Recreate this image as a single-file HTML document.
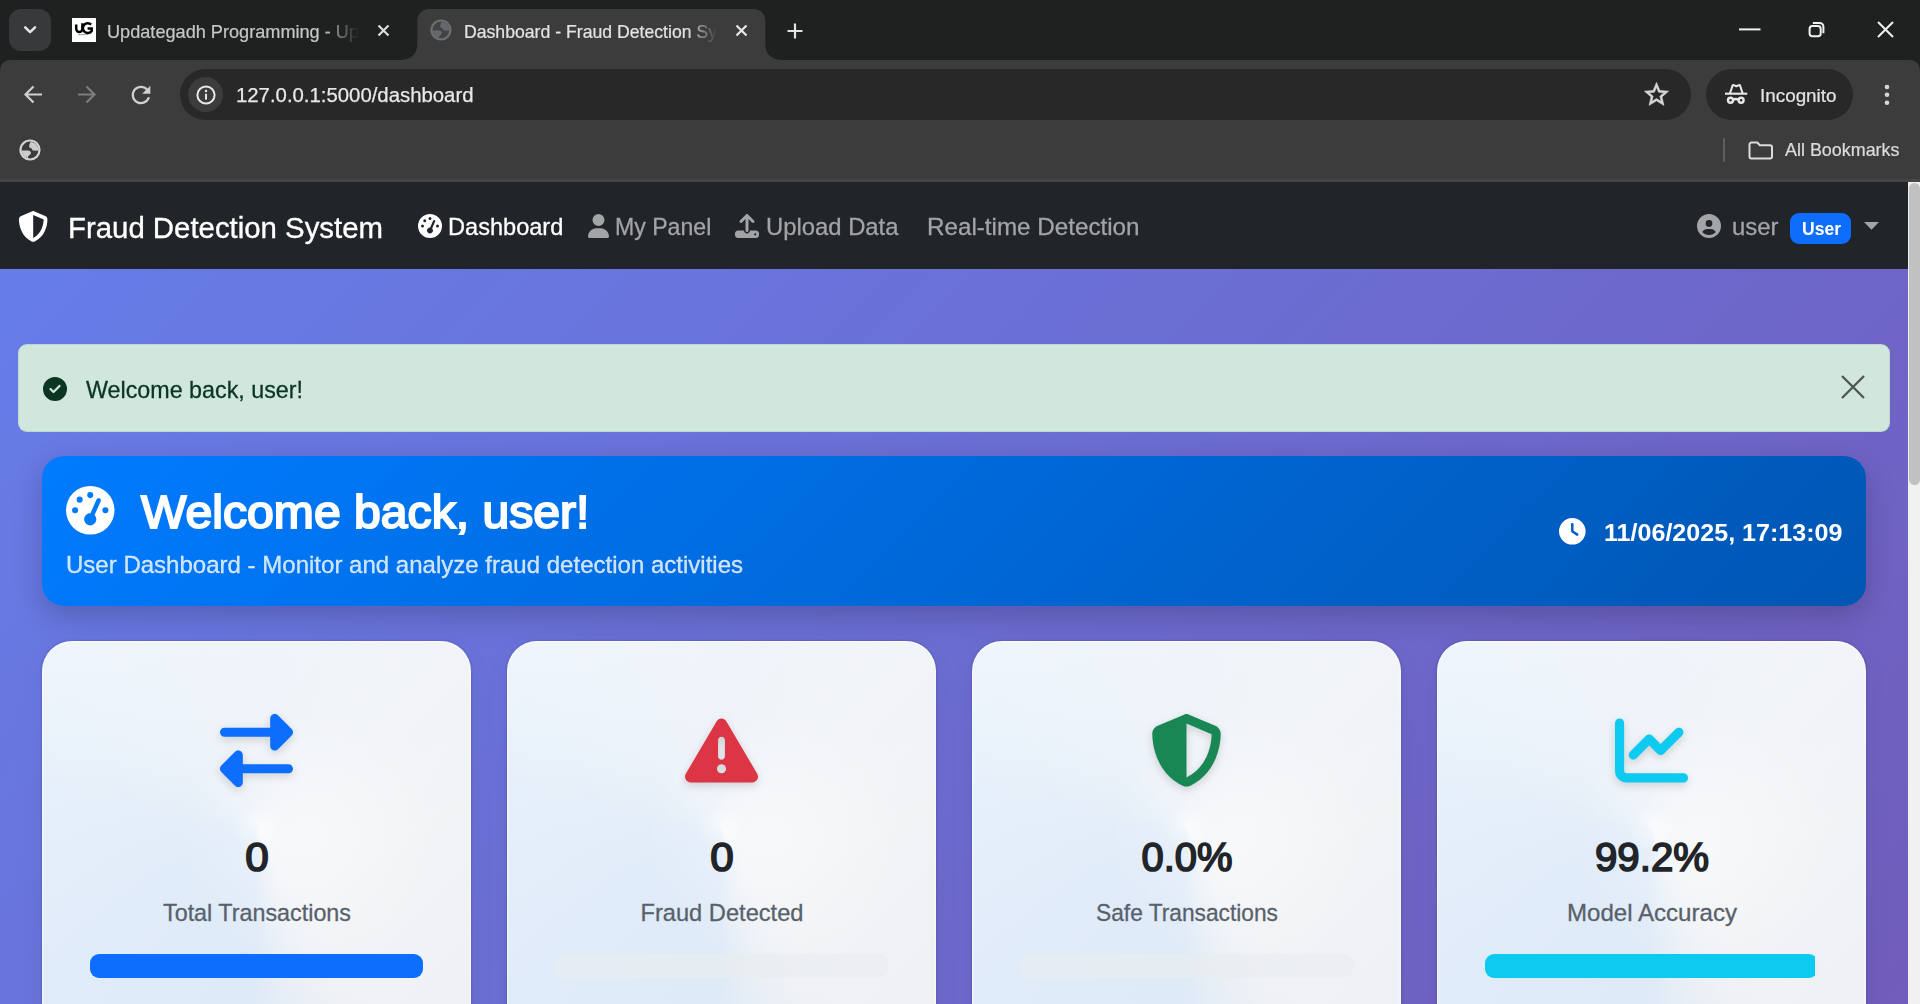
<!DOCTYPE html>
<html lang="en"><head><meta charset="utf-8"><title>Dashboard - Fraud Detection System</title>
<style>
*{margin:0;padding:0;box-sizing:border-box}
html,body{width:1920px;height:1004px;overflow:hidden;background:#1f2120;font-family:"Liberation Sans",sans-serif}
body{position:relative}
.a{position:absolute;display:block}
.t{position:absolute;display:inline-block;white-space:nowrap;font-family:"Liberation Sans",sans-serif}
svg{position:absolute;display:block;overflow:visible}
/* chrome */
#frame{left:0;top:0;width:1920px;height:60px;background:#1f2120}
#tabsearch{left:9px;top:9px;width:42px;height:42px;border-radius:12px;background:#38393a}
#toolbar{left:0;top:60px;width:1920px;height:119px;background:#3c3c3c;border-radius:10px 10px 0 0}
#tbline{left:0;top:178.6px;width:1920px;height:3.1px;background:linear-gradient(#414141,#494949 40%,#494949 70%,#3a3b3d);z-index:5}
#omni{left:180px;top:69.4px;width:1511px;height:50.2px;border-radius:26px;background:#282828}
#chip{left:188px;top:77px;width:35px;height:35px;border-radius:50%;background:#3c3c3c}
#incogpill{left:1706px;top:69.4px;width:147px;height:50.2px;border-radius:26px;background:#282828}
#bmsep{left:1723px;top:138px;width:2px;height:24px;background:#5e5e5e;border-radius:1px}
#fav{left:72px;top:18px;width:24px;height:24px;background:#fff}
/* page */
#page{left:0;top:181px;width:1908px;height:823px;overflow:hidden;background:#6a73d9}
#grad{left:0;top:0;width:1908px;height:2240px;background:linear-gradient(135deg,#667eea 0%,#764ba2 100%)}
#nav{left:0;top:0;width:1908px;height:87.75px;background:#212529}
#sbar{left:1908px;top:181px;width:12px;height:823px;background:#f1f1f1}
#sthumb{left:1909px;top:183px;width:11px;height:302px;background:#c1c1c1;border-radius:6px}
#badge{left:1790px;top:32px;width:61px;height:31px;border-radius:9px;background:#0d6efd}
#alert{left:18px;top:163px;width:1872px;height:88px;border-radius:9px;background:#d1e7dd;border:1.5px solid rgba(163,207,187,.55)}
#hdr{left:42px;top:275px;width:1824px;height:150px;border-radius:22px;background:linear-gradient(135deg,#007bff 0%,#0056b3 100%);box-shadow:0 10px 30px rgba(0,0,0,.2)}
.card{top:460.3px;width:429px;height:430px;border-radius:30px;
 background:radial-gradient(circle at 50% 186.7px,rgba(255,255,255,.5) 0,rgba(255,255,255,0) 24px),radial-gradient(circle at 62% 198px,rgba(255,255,255,.4) 0,rgba(255,255,255,0) 130px),conic-gradient(from 180deg at 50% 186.7px,rgba(0,123,255,0.0808) 0deg,rgba(0,123,255,0.0850) 5deg,rgba(0,123,255,0.0850) 60deg,rgba(0,123,255,0.0757) 95deg,rgba(0,123,255,0.0442) 135deg,rgba(0,123,255,0.0314) 180deg,rgba(0,123,255,0.0170) 225deg,rgba(0,123,255,0.0051) 270deg,rgba(0,123,255,0.0034) 318deg,rgba(0,123,255,0.0068) 328deg,rgba(0,123,255,0.0162) 337deg,rgba(0,123,255,0.0323) 345deg,rgba(0,123,255,0.0527) 352deg,rgba(0,123,255,0.0697) 357deg,rgba(0,123,255,0.0808) 360deg),linear-gradient(135deg,#fafbfc 0%,#f4f5f7 56%,#eff1f4 92%);
 box-shadow:0 0 3px rgba(0,0,0,.22),0 8px 30px rgba(0,0,0,.045),inset 0 0 0 1.5px rgba(255,255,255,.45)}
.prog{top:312.9px;left:48px;width:333px;height:24px;border-radius:9px;background:rgba(233,236,239,.6);overflow:hidden}
.prog i{position:absolute;left:0;top:0;height:24px;display:block}

</style></head><body>
<div id="frame" class="a"></div>
<div id="tabsearch" class="a"></div>
<div id="toolbar" class="a"></div>
<!-- active tab -->
<svg style="left:400px;top:9px" width="383" height="51" viewBox="0 0 383 51"><path d="M0 51 C10 51 17.300 45.500 17.300 36 V12 C17.300 5 22.300 0 29.300 0 H353.300 C360.300 0 365.300 5 365.300 12 V36 C365.300 45.500 372.600 51 382.600 51 Z" fill="#3c3c3c"/></svg>
<div id="tbline" class="a"></div>
<div id="omni" class="a"></div>
<div id="chip" class="a"></div>
<div id="incogpill" class="a"></div>
<div id="bmsep" class="a"></div>
<div id="fav" class="a"></div>
<!-- favicon UG -->
<svg style="left:72px;top:18px" width="24" height="24" viewBox="0 0 24 24"><path d="M4.200 6.600 V10.600 A3.100 3.500 0 0 0 10.400 10.600 V5.200" fill="none" stroke="#000" stroke-width="2.500"/><path d="M19.200 6.600 A4.900 4.900 0 1 0 19.700 13 V10.400 H15.600" fill="none" stroke="#000" stroke-width="2.500"/><rect x="6" y="16.400" width="10" height="0.700" fill="#777"/></svg>
<!-- tab search chevron -->
<svg style="left:22px;top:23px" width="16" height="14" viewBox="0 0 16 14"><path d="M3.2 4.300 L8.100 9.200 L13 4.300" fill="none" stroke="#e3e3e3" stroke-width="2.500" stroke-linecap="round" stroke-linejoin="round"/></svg>
<!-- tab close buttons -->
<svg style="left:377px;top:24px" width="13" height="13" viewBox="0 0 13 13"><path d="M1.5 1.5 L11.5 11.5 M11.5 1.5 L1.5 11.5" stroke="#dcdcdc" stroke-width="2.2" stroke-linecap="butt"/></svg>
<svg style="left:734.5px;top:24px" width="13" height="13" viewBox="0 0 13 13"><path d="M1.5 1.5 L11.5 11.5 M11.5 1.5 L1.5 11.5" stroke="#e8e8e8" stroke-width="2.2" stroke-linecap="butt"/></svg>
<!-- new tab plus -->
<svg style="left:787px;top:22.5px" width="16" height="16" viewBox="0 0 16 16"><path d="M8 0.5 V15.5 M0.5 8 H15.5" stroke="#e3e3e3" stroke-width="2.2"/></svg>
<!-- globe tab -->
<svg style="left:429px;top:17.6px" width="24" height="24" viewBox="0 0 24 24"><circle cx="12" cy="12" r="10.600" fill="#6e6f71"/><circle cx="12" cy="12" r="8.400" fill="#424347"/><path d="M12.800 3.650 A8.400 8.400 0 0 1 20.400 12.800 L14.600 12.600 C14.400 10.800 13.200 9.600 11 9.200 C11.200 7 11.600 5.400 12.800 3.650 Z" fill="#67686b"/><path d="M3.700 12.600 A8.400 8.400 0 0 0 10.200 20.200 C9.600 18.600 10.400 17.600 12 16.800 C13.200 16 13.200 14.600 12.400 13.600 C11.600 12.800 10.600 12.600 9.500 12.600 Z" fill="#67686b"/></svg>
<!-- window controls -->
<svg style="left:1739px;top:27.5px" width="22" height="3" viewBox="0 0 22 3"><rect x="0" y="0.4" width="21.5" height="2" fill="#f0f0f0"/></svg>
<svg style="left:1808px;top:21px" width="18" height="18" viewBox="0 0 18 18"><rect x="1.600" y="5.100" width="11.100" height="10.200" rx="2.800" fill="none" stroke="#f0f0f0" stroke-width="2"/><path d="M4.800 1.900 H11.600 A3.800 3.800 0 0 1 15.400 5.700 V12.300" fill="none" stroke="#f0f0f0" stroke-width="2"/></svg>
<svg style="left:1877px;top:21px" width="17" height="17" viewBox="0 0 17 17"><path d="M1 1 L16 16 M16 1 L1 16" stroke="#f0f0f0" stroke-width="2"/></svg>
<!-- nav arrows -->
<svg style="left:23px;top:84px" width="21" height="21" viewBox="0 0 21 21"><path d="M19 10.5 H3 M10.5 2.5 L2.5 10.5 L10.5 18.5" fill="none" stroke="#d0d0d0" stroke-width="2.2" stroke-linejoin="miter"/></svg>
<svg style="left:76px;top:84px" width="21" height="21" viewBox="0 0 21 21"><path d="M2 10.5 H18 M10.5 2.5 L18.500 10.5 L10.5 18.5" fill="none" stroke="#7d7d7d" stroke-width="2.2" stroke-linejoin="miter"/></svg>
<!-- reload -->
<svg style="left:126.500px;top:80.500px" width="28" height="28" viewBox="0 0 24 24"><path d="M17.65 6.35C16.2 4.9 14.21 4 12 4c-4.42 0-7.99 3.58-7.99 8s3.570 8 7.990 8c3.730 0 6.840-2.550 7.730-6h-2.080c-.82 2.330-3.040 4-5.650 4-3.310 0-6-2.690-6-6s2.690-6 6-6c1.660 0 3.140.69 4.220 1.780L13 11h7V4l-2.350 2.350z" fill="#d0d0d0"/></svg>
<!-- info icon -->
<svg style="left:194.500px;top:83.500px" width="22" height="22" viewBox="0 0 22 22"><circle cx="11" cy="11" r="8.600" fill="none" stroke="#e8e8e8" stroke-width="2"/><rect x="10" y="9.800" width="2" height="5.800" fill="#e8e8e8"/><circle cx="11" cy="7" r="1.250" fill="#e8e8e8"/></svg>
<!-- star -->
<svg style="left:1641.500px;top:79.600px" width="29" height="29" viewBox="0 0 24 24"><path stroke="#d6d6d6" stroke-width="0.500" d="M22 9.240l-7.190-.62L12 2 9.190 8.630 2 9.240l5.460 4.730L5.820 21 12 17.270 18.180 21l-1.630-7.030L22 9.240zM12 15.400l-3.760 2.270 1-4.280-3.320-2.880 4.380-.38L12 6.100l1.710 4.040 4.380.38-3.320 2.880 1 4.280L12 15.400z" fill="#d6d6d6"/></svg>
<!-- incognito icon -->
<svg style="left:1724px;top:83px" width="25" height="22" viewBox="0 0 25 22"><path d="M1 10.700 H23.300" stroke="#e8e8e8" stroke-width="2.100" fill="none"/><path d="M5.900 10.500 L8.600 2.500 Q8.900 1.800 9.600 2.100 L12.300 3.300 L15 2.100 Q15.700 1.800 16 2.500 L18.700 10.500" stroke="#e8e8e8" stroke-width="2.100" fill="none" stroke-linejoin="round"/><circle cx="6.500" cy="17.300" r="2.500" stroke="#e8e8e8" stroke-width="2.400" fill="none"/><circle cx="17.100" cy="17.300" r="2.500" stroke="#e8e8e8" stroke-width="2.400" fill="none"/><path d="M9 16.700 Q11.800 15.300 14.600 16.700" stroke="#e8e8e8" stroke-width="2.300" fill="none"/></svg>
<!-- kebab -->
<svg style="left:1883px;top:84px" width="8" height="22" viewBox="0 0 8 22"><circle cx="4" cy="3" r="2.300" fill="#d6d6d6"/><circle cx="4" cy="10.800" r="2.300" fill="#d6d6d6"/><circle cx="4" cy="18.700" r="2.300" fill="#d6d6d6"/></svg>
<!-- bookmark globe -->
<svg style="left:18px;top:137.7px" width="24" height="24" viewBox="0 0 24 24"><circle cx="12" cy="12" r="10.600" fill="#d3d4d6"/><circle cx="12" cy="12" r="8.400" fill="#3a3a3b"/><path d="M12.800 3.650 A8.400 8.400 0 0 1 20.400 12.800 L14.600 12.600 C14.400 10.800 13.200 9.600 11 9.200 C11.200 7 11.600 5.400 12.800 3.650 Z" fill="#cbccce"/><path d="M3.700 12.600 A8.400 8.400 0 0 0 10.200 20.200 C9.600 18.600 10.400 17.600 12 16.800 C13.200 16 13.200 14.600 12.400 13.600 C11.600 12.800 10.600 12.600 9.500 12.600 Z" fill="#cbccce"/></svg>
<!-- folder -->
<svg style="left:1748px;top:141px" width="26" height="19" viewBox="0 0 26 19"><path d="M3.500 1.500 H9.300 L11.800 4.200 H22 A2 2 0 0 1 24 6.200 V15.500 A2 2 0 0 1 22 17.500 H3.500 A2 2 0 0 1 1.500 15.500 V3.500 A2 2 0 0 1 3.500 1.500 Z" fill="none" stroke="#dcdcdc" stroke-width="2" stroke-linejoin="round"/></svg>

<!-- ================= PAGE ================= -->
<div id="page" class="a">
  <div id="grad" class="a"></div>
  <div id="nav" class="a"></div>
  <div id="badge" class="a"></div>
  <div id="alert" class="a"></div>
  <div id="hdr" class="a"></div>
  <div class="a card" style="left:42px"><div class="a prog"><i style="width:333px;background:#0d6efd"></i></div></div>
  <div class="a card" style="left:507px"><div class="a prog"></div></div>
  <div class="a card" style="left:972px"><div class="a prog"></div></div>
  <div class="a card" style="left:1437px"><div class="a prog"><i style="width:330px;background:#0dcaf0"></i></div></div>
</div>
<div id="sbar" class="a"></div>
<div id="sthumb" class="a"></div>

<!-- navbar icons (coords in screen space) -->
<!-- shield -->
<svg style="left:17.800px;top:211.200px" width="30.400" height="31" viewBox="0 0 512 512" preserveAspectRatio="none"><path fill="#fff" d="M256 0c4.600 0 9.200 1 13.400 2.900L457.700 82.800c22 9.300 38.400 31 38.300 57.200c-.5 99.200-41.300 280.700-213.600 363.200c-16.700 8-36.100 8-52.800 0C57.300 420.700 16.500 239.200 16 140c-.1-26.200 16.300-47.900 38.300-57.200L242.700 2.900C246.800 1 251.400 0 256 0zm0 66.800V444.800C394 378 431.100 230.100 432 141.400L256 66.800l0 0z"/></svg>
<!-- gauge small -->
<svg style="left:417.500px;top:213.500px" width="24" height="24" viewBox="0 0 512 512"><path fill="#fff" d="M0 256a256 256 0 1 1 512 0A256 256 0 1 1 0 256zM288 96a32 32 0 1 0 -64 0 32 32 0 1 0 64 0zM256 416c35.300 0 64-28.700 64-64c0-17.400-6.900-33.100-18.100-44.600L366 161.700c5.300-12.100-.2-26.300-12.300-31.600s-26.300 .2-31.600 12.300L257.900 288c-.6 0-1.300 0-1.900 0c-35.300 0-64 28.700-64 64s28.700 64 64 64zM176 144a32 32 0 1 0 -64 0 32 32 0 1 0 64 0zM96 288a32 32 0 1 0 0-64 32 32 0 1 0 0 64zm352-32a32 32 0 1 0 -64 0 32 32 0 1 0 64 0z"/></svg>
<!-- user -->
<svg style="left:588px;top:213.500px" width="21" height="24" viewBox="0 0 448 512"><path fill="#a2a4a5" d="M224 256A128 128 0 1 0 224 0a128 128 0 1 0 0 256zm-45.700 48C79.800 304 0 383.800 0 482.300C0 498.700 13.300 512 29.700 512H418.300c16.400 0 29.700-13.300 29.700-29.700C448 383.800 368.200 304 269.700 304H178.300z"/></svg>
<!-- upload -->
<svg style="left:735px;top:213.500px" width="24" height="24" viewBox="0 0 512 512"><path fill="#a2a4a5" d="M288 109.300V352c0 17.700-14.300 32-32 32s-32-14.300-32-32V109.300l-73.400 73.400c-12.500 12.500-32.800 12.500-45.300 0s-12.500-32.800 0-45.300l128-128c12.500-12.500 32.800-12.500 45.300 0l128 128c12.500 12.500 12.500 32.800 0 45.300s-32.800 12.500-45.300 0L288 109.300zM64 352H192c0 35.300 28.700 64 64 64s64-28.700 64-64H448c35.300 0 64 28.700 64 64v32c0 35.300-28.700 64-64 64H64c-35.300 0-64-28.700-64-64V416c0-35.300 28.700-64 64-64zM432 456a24 24 0 1 0 0-48 24 24 0 1 0 0 48z"/></svg>
<!-- circle-user -->
<svg style="left:1696.500px;top:213.800px" width="24" height="24" viewBox="0 0 512 512"><path fill="#a3a5a7" d="M399 384.200C376.900 345.800 335.400 320 288 320H224c-47.400 0-88.900 25.800-111 64.200c35.200 39.200 86.200 63.800 143 63.800s107.800-24.700 143-63.800zM0 256a256 256 0 1 1 512 0A256 256 0 1 1 0 256zm256 16a72 72 0 1 0 0-144 72 72 0 1 0 0 144z"/></svg>
<!-- caret -->
<svg style="left:1863.500px;top:222px" width="15" height="8" viewBox="0 0 15 8"><path d="M0 0 H15 L7.500 7.800 Z" fill="#a2a4a5"/></svg>
<!-- alert check -->
<svg style="left:43px;top:377px" width="24" height="24" viewBox="0 0 512 512"><path fill="#0a3622" d="M256 512A256 256 0 1 0 256 0a256 256 0 1 0 0 512zM369 209L241 337c-9.400 9.400-24.600 9.400-33.900 0l-64-64c-9.400-9.400-9.400-24.600 0-33.900s24.600-9.400 33.900 0l47 47L335 175c9.400-9.400 24.600-9.400 33.900 0s9.400 24.600 0 33.900z"/></svg>
<!-- alert close -->
<svg style="left:1841px;top:375px" width="24" height="24" viewBox="0 0 24 24"><path d="M1 1 L23 23 M23 1 L1 23" stroke="#4d5753" stroke-width="2.300"/></svg>
<!-- header gauge -->
<svg style="left:65.500px;top:486.200px" width="48.500" height="48.500" viewBox="0 0 512 512"><path fill="#fff" d="M0 256a256 256 0 1 1 512 0A256 256 0 1 1 0 256zM288 96a32 32 0 1 0 -64 0 32 32 0 1 0 64 0zM256 416c35.300 0 64-28.700 64-64c0-17.400-6.900-33.100-18.100-44.600L366 161.700c5.300-12.100-.2-26.300-12.300-31.600s-26.300 .2-31.600 12.300L257.900 288c-.6 0-1.300 0-1.900 0c-35.300 0-64 28.700-64 64s28.700 64 64 64zM176 144a32 32 0 1 0 -64 0 32 32 0 1 0 64 0zM96 288a32 32 0 1 0 0-64 32 32 0 1 0 0 64zm352-32a32 32 0 1 0 -64 0 32 32 0 1 0 64 0z"/></svg>
<!-- clock -->
<svg style="left:1559.300px;top:517.800px" width="26.600" height="26.600" viewBox="0 0 512 512"><path fill="#fff" d="M256 0a256 256 0 1 1 0 512A256 256 0 1 1 256 0zM232 120V256c0 8 4 15.500 10.700 20l96 64c11 7.400 25.900 4.400 33.300-6.700s4.400-25.900-6.700-33.300L280 243.200V120c0-13.300-10.700-24-24-24s-24 10.700-24 24z"/></svg>
<!-- card icons -->
<svg style="left:220px;top:714px;filter:drop-shadow(0 3px 4px rgba(0,0,0,.15))" width="73" height="73" viewBox="0 0 512 512"><path fill="#0d6efd" d="M32 96l320 0V32c0-12.900 7.800-24.600 19.800-29.600s25.700-2.200 34.900 6.900l96 96c6 6 9.400 14.100 9.400 22.600s-3.400 16.600-9.400 22.600l-96 96c-9.200 9.200-22.900 11.900-34.900 6.900s-19.800-16.600-19.800-29.600V160L32 160c-17.700 0-32-14.300-32-32s14.300-32 32-32zM480 352c17.700 0 32 14.300 32 32s-14.300 32-32 32H160v64c0 12.900-7.800 24.600-19.800 29.600s-25.700 2.200-34.900-6.900l-96-96c-6-6-9.400-14.100-9.400-22.600s3.400-16.600 9.400-22.600l96-96c9.200-9.200 22.900-11.900 34.900-6.900s19.800 16.600 19.800 29.600l0 64H480z"/></svg>
<svg style="left:685px;top:714px;filter:drop-shadow(0 3px 4px rgba(0,0,0,.15))" width="73" height="73" viewBox="0 0 512 512"><path fill="#dc3545" d="M256 32c14.200 0 27.300 7.500 34.500 19.800l216 368c7.300 12.400 7.300 27.700 .2 40.100S486.300 480 472 480H40c-14.300 0-27.600-7.700-34.700-20.100s-7-27.800 .2-40.100l216-368C228.700 39.500 241.800 32 256 32zm0 128c-13.300 0-24 10.700-24 24V296c0 13.300 10.700 24 24 24s24-10.700 24-24V184c0-13.300-10.700-24-24-24zm32 224a32 32 0 1 0 -64 0 32 32 0 1 0 64 0z"/></svg>
<svg style="left:1150px;top:714px;filter:drop-shadow(0 3px 4px rgba(0,0,0,.15))" width="73" height="73" viewBox="0 0 512 512"><path fill="#198754" d="M256 0c4.600 0 9.200 1 13.400 2.900L457.700 82.800c22 9.300 38.400 31 38.300 57.200c-.5 99.200-41.300 280.700-213.600 363.200c-16.700 8-36.100 8-52.800 0C57.300 420.700 16.500 239.200 16 140c-.1-26.200 16.300-47.900 38.300-57.200L242.700 2.900C246.800 1 251.400 0 256 0zm0 66.800V444.800C394 378 431.100 230.100 432 141.400L256 66.800l0 0z"/></svg>
<svg style="left:1615px;top:714px;filter:drop-shadow(0 3px 4px rgba(0,0,0,.15))" width="73" height="73" viewBox="0 0 512 512"><path fill="#0dcaf0" d="M64 64c0-17.700-14.300-32-32-32S0 46.300 0 64V400c0 44.200 35.800 80 80 80H480c17.700 0 32-14.300 32-32s-14.300-32-32-32H80c-8.800 0-16-7.200-16-16V64zm406.600 86.600c12.500-12.500 12.500-32.800 0-45.300s-32.800-12.500-45.300 0L320 210.700l-57.400-57.400c-12.500-12.500-32.800-12.500-45.300 0l-112 112c-12.500 12.500-12.500 32.800 0 45.300s32.800 12.500 45.300 0L240 221.300l57.400 57.400c12.500 12.500 32.800 12.500 45.300 0l128-128z"/></svg>

<span id="tab1" class="t" style="top:23.99px;left:107px;transform-origin:0 50%;transform:scaleX(1.0234);font-size:17.73px;line-height:17.73px;font-weight:400;color:#c4c7c5;-webkit-mask-image:linear-gradient(90deg,#000 0,#000 86%,transparent 100%);mask-image:linear-gradient(90deg,#000 0,#000 86%,transparent 100%);-webkit-text-stroke:0.21px #c4c7c5;">Updategadh Programming - Up</span>
<span id="tab2" class="t" style="top:23.99px;left:464px;transform-origin:0 50%;transform:scaleX(0.9957);font-size:17.73px;line-height:17.73px;font-weight:400;color:#e3e3e3;-webkit-mask-image:linear-gradient(90deg,#000 0,#000 88%,transparent 100%);mask-image:linear-gradient(90deg,#000 0,#000 88%,transparent 100%);-webkit-text-stroke:0.21px #e3e3e3;">Dashboard - Fraud Detection Sy</span>
<span id="url" class="t" style="top:85.29px;left:236px;transform-origin:0 50%;transform:scaleX(0.9839);font-size:20.68px;line-height:20.68px;font-weight:400;color:#e8e8e8;-webkit-text-stroke:0.25px #e8e8e8;">127.0.0.1:5000/dashboard</span>
<span id="incog" class="t" style="top:86.04px;left:1759.5px;transform-origin:0 50%;transform:scaleX(0.9823);font-size:19.21px;line-height:19.21px;font-weight:400;color:#e3e3e3;-webkit-text-stroke:0.23px #e3e3e3;">Incognito</span>
<span id="allbm" class="t" style="top:141.59px;left:1784.5px;transform-origin:0 50%;transform:scaleX(1.0112);font-size:17.73px;line-height:17.73px;font-weight:400;color:#dcdcdc;-webkit-text-stroke:0.21px #dcdcdc;">All Bookmarks</span>
<span id="brand" class="t" style="top:213.49px;left:68px;transform-origin:0 50%;transform:scaleX(0.9939);font-size:29.55px;line-height:29.55px;font-weight:400;color:#fff;-webkit-text-stroke:0.35px #fff;">Fraud Detection System</span>
<span id="n1" class="t" style="top:215.99px;left:447.5px;transform-origin:0 50%;transform:scaleX(0.9976);font-size:23.64px;line-height:23.64px;font-weight:400;color:#fff;-webkit-text-stroke:0.28px #fff;">Dashboard</span>
<span id="n2" class="t" style="top:215.99px;left:614.5px;transform-origin:0 50%;transform:scaleX(0.9778);font-size:23.64px;line-height:23.64px;font-weight:400;color:#a2a4a5;-webkit-text-stroke:0.28px #a2a4a5;">My Panel</span>
<span id="n3" class="t" style="top:215.99px;left:765.5px;transform-origin:0 50%;transform:scaleX(1.0088);font-size:23.64px;line-height:23.64px;font-weight:400;color:#a2a4a5;-webkit-text-stroke:0.28px #a2a4a5;">Upload Data</span>
<span id="n4" class="t" style="top:215.99px;left:926.5px;transform-origin:0 50%;transform:scaleX(1.0243);font-size:23.64px;line-height:23.64px;font-weight:400;color:#a2a4a5;-webkit-text-stroke:0.28px #a2a4a5;">Real-time Detection</span>
<span id="uname" class="t" style="top:215.99px;left:1732px;transform-origin:0 50%;transform:scaleX(1.0116);font-size:23.64px;line-height:23.64px;font-weight:400;color:#a2a4a5;-webkit-text-stroke:0.28px #a2a4a5;">user</span>
<span id="ubadge" class="t" style="top:220.79px;left:1801.5px;transform-origin:0 50%;transform:scaleX(0.9897);font-size:17.73px;line-height:17.73px;font-weight:700;color:#fff;">User</span>
<span id="alerttxt" class="t" style="top:378.89px;left:86px;transform-origin:0 50%;transform:scaleX(0.9857);font-size:23.64px;line-height:23.64px;font-weight:400;color:#0a3622;-webkit-text-stroke:0.28px #0a3622;">Welcome back, user!</span>
<span id="title" class="t" style="top:488.51px;left:140.8px;transform-origin:0 50%;transform:scaleX(1.0424);font-size:46.18px;line-height:46.18px;font-weight:400;color:#fff;-webkit-text-stroke:2px #fff;">Welcome back, user!</span>
<span id="sub" class="t" style="top:553.69px;left:66px;transform-origin:0 50%;transform:scaleX(1.0169);font-size:23.64px;line-height:23.64px;font-weight:400;color:rgba(255,255,255,.8);-webkit-text-stroke:0.28px rgba(255,255,255,.8);">User Dashboard - Monitor and analyze fraud detection activities</span>
<span id="date" class="t" style="top:520.88px;left:1604px;transform-origin:0 50%;transform:scaleX(1.0451);font-size:24.00px;line-height:24.00px;font-weight:700;color:#fff;">11/06/2025, 17:13:09</span>
<span id="v1" class="t" style="top:836.89px;left:256.5px;transform-origin:0 50%;transform:scaleX(1.0423) translateX(-50%);font-size:40.53px;line-height:40.53px;font-weight:400;color:#212529;-webkit-text-stroke:1.7px #212529;">0</span>
<span id="v2" class="t" style="top:836.89px;left:721.5px;transform-origin:0 50%;transform:scaleX(1.0423) translateX(-50%);font-size:40.53px;line-height:40.53px;font-weight:400;color:#212529;-webkit-text-stroke:1.7px #212529;">0</span>
<span id="v3" class="t" style="top:836.89px;left:1186.5px;transform-origin:0 50%;transform:scaleX(0.9853) translateX(-50%);font-size:40.53px;line-height:40.53px;font-weight:400;color:#212529;-webkit-text-stroke:1.7px #212529;">0.0%</span>
<span id="v4" class="t" style="top:836.89px;left:1651.5px;transform-origin:0 50%;transform:scaleX(0.9922) translateX(-50%);font-size:40.53px;line-height:40.53px;font-weight:400;color:#212529;-webkit-text-stroke:1.7px #212529;">99.2%</span>
<span id="l1" class="t" style="top:901.99px;left:256.5px;transform-origin:0 50%;transform:scaleX(0.9874) translateX(-50%);font-size:23.64px;line-height:23.64px;font-weight:400;color:#58616b;-webkit-text-stroke:0.28px #58616b;">Total Transactions</span>
<span id="l2" class="t" style="top:901.99px;left:721.5px;transform-origin:0 50%;transform:scaleX(1.0010) translateX(-50%);font-size:23.64px;line-height:23.64px;font-weight:400;color:#58616b;-webkit-text-stroke:0.28px #58616b;">Fraud Detected</span>
<span id="l3" class="t" style="top:901.99px;left:1186.5px;transform-origin:0 50%;transform:scaleX(0.9624) translateX(-50%);font-size:23.64px;line-height:23.64px;font-weight:400;color:#58616b;-webkit-text-stroke:0.28px #58616b;">Safe Transactions</span>
<span id="l4" class="t" style="top:901.99px;left:1651.5px;transform-origin:0 50%;transform:scaleX(1.0194) translateX(-50%);font-size:23.64px;line-height:23.64px;font-weight:400;color:#58616b;-webkit-text-stroke:0.28px #58616b;">Model Accuracy</span>
</body></html>
